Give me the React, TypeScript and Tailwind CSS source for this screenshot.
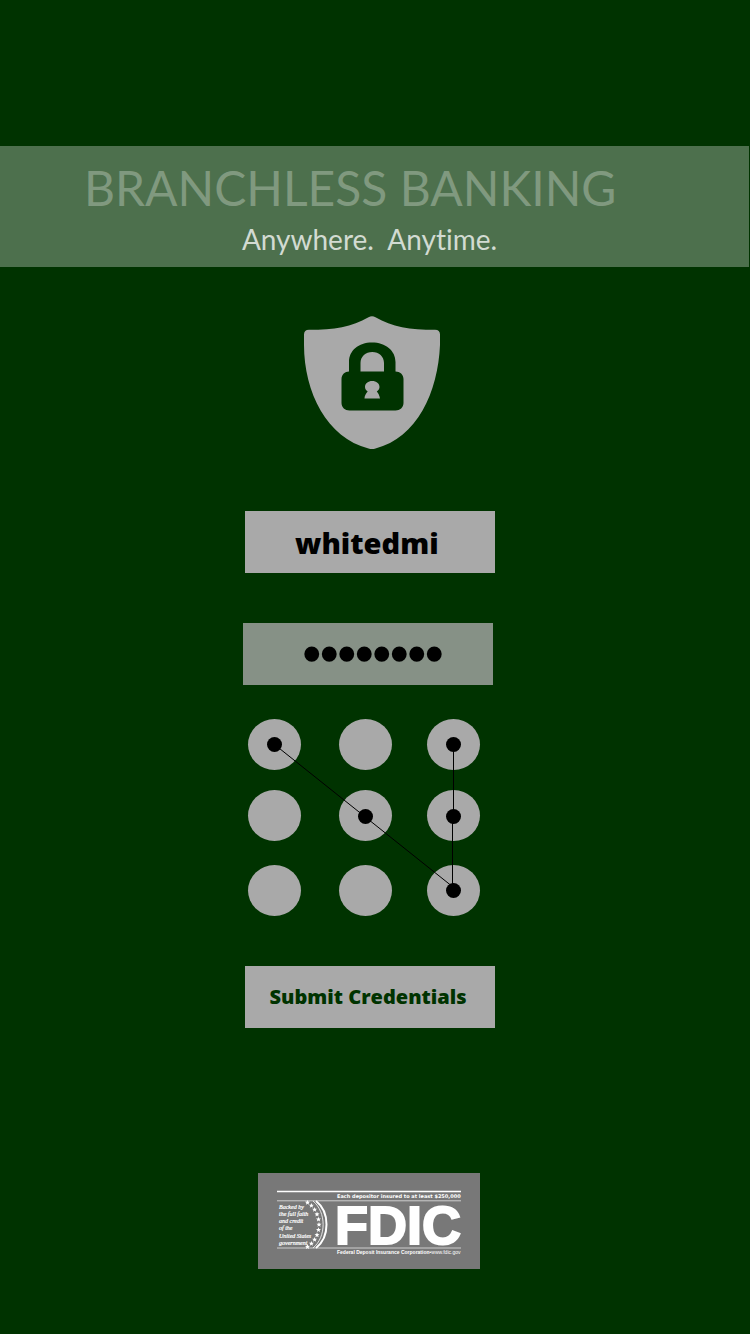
import { useState } from "react";

const nodes = ["1", "2", "3", "4", "5", "6", "7", "8", "9"];

const patternDots = [
  [26, 25],
  [205, 25],
  [117, 97],
  [205, 97],
  [205, 171],
];

function ShieldLock() {
  return (
    <svg width="136" height="134" viewBox="0 0 136 134" role="img" aria-label="Secure sign in">
      <path
        fill="#a9a9a9"
        d="M64.5 1.2 Q68 -0.8 71.5 1.2 C88 11 106 13.800 131 13.800 Q136 14 136 18.500 V29 C134 76 113 122 71.500 132.500 Q68 133.500 64.500 132.500 C23 122 0 76 0 29 V18.500 Q0 14 5 13.800 C30 13.800 48 11 64.500 1.200Z"
      />
      <path
        fill="#003300"
        fillRule="evenodd"
        d="M45 55.500 V46 C45 34.500 54.500 26.500 68 26.500 S91.500 34.500 91.500 46 V55.500 C96 55.500 99.500 58.500 99.500 63 V87 C99.500 91.500 96 94.500 91.500 94.500 H45.500 C41 94.500 37.500 91.500 37.500 87 V63 C37.500 58.500 41 55.500 45 55.500Z M56.500 55.500 H80 V47 C80 40.500 75 36 68.300 36 S56.500 40.500 56.500 47Z M60.500 82.500 H76 C75.500 79 74 77 72.800 75.500 C74.500 74.500 75.500 72.500 75.500 71 C75.500 67.500 72.300 65 68.200 65 S61 67.500 61 71 C61 72.500 62 74.500 63.700 75.500 C62 77.500 60.500 79.500 60.500 82.500Z"
      />
    </svg>
  );
}

const starAngles = [-60, -48, -36, -24, -12, 0, 12, 24, 36, 48, 60];

function FdicBadge() {
  return (
    <svg width="222" height="96" viewBox="0 0 222 96" role="img" aria-label="FDIC insured">
      <rect width="222" height="96" fill="#787878" />
      <g stroke="#ffffff">
        <path d="M19 18.500H203" strokeWidth="1.600" />
        <path d="M19 27.800H203M19 75H203" strokeWidth="0.800" opacity="0.800" />
      </g>
      <g fill="none" stroke="#ffffff">
        <path d="M58 28 C72 39 72 64 58 75" strokeWidth="2" />
        <path d="M55 28 C68.500 39 68.500 64 55 75" strokeWidth="0.800" />
      </g>
      <g fill="#ffffff">
        {starAngles.map((angle) => {
          const rad = (angle * Math.PI) / 180;
          const x = 38 + Math.cos(rad) * 23;
          const y = 51.5 + Math.sin(rad) * 25.5;
          return (
            <path
              key={angle}
              transform={`translate(${x} ${y})`}
              d="M0 -2.500L.7 -.8L2.500 -.7L1.100 .5L1.600 2.300L0 1.300L-1.600 2.300L-1.100 .5L-2.500 -.7L-.7 -.8Z"
            />
          );
        })}
      </g>
      <g
        fill="#ffffff"
        stroke="#ffffff"
        strokeWidth="0.200"
        fontFamily="'Liberation Serif', serif"
        fontStyle="italic"
        fontSize="6"
      >
        <text x="21" y="36">Backed by</text>
        <text x="21" y="43">the full faith</text>
        <text x="21" y="50">and credit</text>
        <text x="21" y="57">of the</text>
        <text x="21" y="65">United States</text>
        <text x="21" y="72">government</text>
      </g>
      <g fill="#ffffff" fontFamily="'Liberation Sans', sans-serif" fontWeight="700">
        <text x="79" y="25" fontFamily="'DejaVu Sans', sans-serif" fontSize="5">
          Each depositor insured to at least $250,000
        </text>
        <text x="77" y="71" fontSize="54" stroke="#ffffff" strokeWidth="2">FDIC</text>
        <text x="79" y="81" fontSize="5">
          Federal Deposit Insurance Corporation
          <tspan fontWeight="400">•www.fdic.gov</tspan>
        </text>
      </g>
    </svg>
  );
}

export default function App() {
  const [user, setUser] = useState("whitedmi");
  const [password, setPassword] = useState("banking8");

  return (
    <div className="min-h-screen bg-[#003300] pt-[146px] pb-16 font-['Lato','Open_Sans',sans-serif] [font-variant-ligatures:none]">
      <header className="mr-px h-[121px] bg-[#4d704d] pt-[14px]">
        <h1 className="pl-[84px] text-[48px] leading-[56px] whitespace-nowrap text-[#80997f]">BRANCHLESS BANKING</h1>
        <p className="pr-[10px] text-center text-[28px] leading-[46px] whitespace-pre text-[#d2dbd2]">Anywhere.  Anytime.</p>
      </header>

      <main className="flex flex-col items-center pr-[10px]">
        <div className="mt-[49px] pl-1">
          <ShieldLock />
        </div>

        <form className="mt-[61px] flex w-[250px] flex-col" onSubmit={(e) => e.preventDefault()}>
          <input
            aria-label="User name"
            className="h-[62px] w-full bg-[#a9a9a9] pl-[50px] font-['Open_Sans',sans-serif] text-[29px] font-extrabold text-black outline-none"
            value={user}
            onChange={(e) => setUser(e.target.value)}
          />
          <input
            type="password"
            aria-label="Password"
            className="mt-[50px] -ml-0.5 h-[62px] w-[250px] bg-[#869186] pl-[60px] font-['Liberation_Serif',serif] text-[50px] text-black outline-none [-webkit-text-stroke:3px_black]"
            value={password}
            onChange={(e) => setPassword(e.target.value)}
          />

          <div
            role="group"
            aria-label="Unlock pattern"
            className="relative mt-[34px] ml-[3px] grid w-[232px] grid-cols-[91px_88px_53px] grid-rows-[71px_75px_51px]"
          >
            {nodes.map((n) => (
              <button
                key={n}
                type="button"
                aria-label={`Pattern point ${n}`}
                className="h-[51px] w-[53px] rounded-[50%] bg-[#a9a9a9]"
              />
            ))}
            <svg className="pointer-events-none absolute inset-0" width="232" height="197" viewBox="0 0 232 197" aria-hidden="true">
              <path d="M26.500 25.500L205 168M205.500 25V97M204.500 97V168" fill="none" stroke="#000000" strokeWidth="1" />
              {patternDots.map(([x, y]) => (
                <circle key={`${x}-${y}`} cx={x + 0.5} cy={y + 0.5} r="7.500" />
              ))}
            </svg>
          </div>

          <button
            type="submit"
            className="mt-[50px] h-[62px] w-full bg-[#a9a9a9] pr-1 font-['Open_Sans',sans-serif] text-[20px] font-extrabold text-[#003300]"
          >
            Submit Credentials
          </button>
        </form>

        <footer className="mt-[145px] pr-0.5">
          <FdicBadge />
        </footer>
      </main>
    </div>
  );
}
